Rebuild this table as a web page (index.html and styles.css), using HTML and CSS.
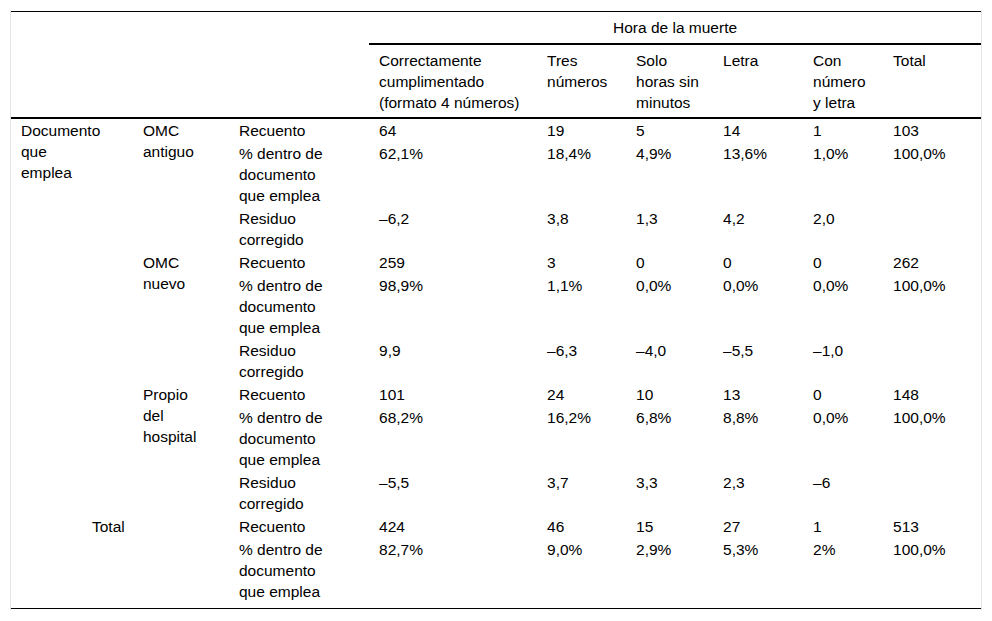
FILE: index.html
```html
<!DOCTYPE html>
<html lang="es">
<head>
<meta charset="utf-8">
<title>Hora de la muerte</title>
<link rel="stylesheet" href="styles.css">
</head>
<body>
<div class="table-wrap">
<table class="data">
<colgroup>
<col class="c1"><col class="c2"><col class="c3"><col class="c4"><col class="c5"><col class="c6"><col class="c7"><col class="c8"><col class="c9">
</colgroup>
<thead>
<tr class="h1">
<th colspan="3" rowspan="2" class="blank"></th>
<th colspan="6" class="group">Hora de la muerte</th>
</tr>
<tr class="h2">
<th>Correctamente<br>cumplimentado<br>(formato 4 números)</th>
<th>Tres<br>números</th>
<th>Solo<br>horas sin<br>minutos</th>
<th>Letra</th>
<th>Con<br>número<br>y letra</th>
<th>Total</th>
</tr>
</thead>
<tbody>
<tr>
<td rowspan="9">Documento<br>que<br>emplea</td>
<td rowspan="3">OMC<br>antiguo</td>
<td>Recuento</td><td>64</td><td>19</td><td>5</td><td>14</td><td>1</td><td>103</td>
</tr>
<tr>
<td>% dentro de<br>documento<br>que emplea</td><td>62,1%</td><td>18,4%</td><td>4,9%</td><td>13,6%</td><td>1,0%</td><td>100,0%</td>
</tr>
<tr>
<td>Residuo<br>corregido</td><td>–6,2</td><td>3,8</td><td>1,3</td><td>4,2</td><td>2,0</td><td></td>
</tr>
<tr>
<td rowspan="3">OMC<br>nuevo</td>
<td>Recuento</td><td>259</td><td>3</td><td>0</td><td>0</td><td>0</td><td>262</td>
</tr>
<tr>
<td>% dentro de<br>documento<br>que emplea</td><td>98,9%</td><td>1,1%</td><td>0,0%</td><td>0,0%</td><td>0,0%</td><td>100,0%</td>
</tr>
<tr>
<td>Residuo<br>corregido</td><td>9,9</td><td>–6,3</td><td>–4,0</td><td>–5,5</td><td>–1,0</td><td></td>
</tr>
<tr>
<td rowspan="3">Propio<br>del<br>hospital</td>
<td>Recuento</td><td>101</td><td>24</td><td>10</td><td>13</td><td>0</td><td>148</td>
</tr>
<tr>
<td>% dentro de<br>documento<br>que emplea</td><td>68,2%</td><td>16,2%</td><td>6,8%</td><td>8,8%</td><td>0,0%</td><td>100,0%</td>
</tr>
<tr>
<td>Residuo<br>corregido</td><td>–5,5</td><td>3,7</td><td>3,3</td><td>2,3</td><td>–6</td><td></td>
</tr>
<tr>
<td colspan="2" rowspan="2" class="total-label">Total</td>
<td>Recuento</td><td>424</td><td>46</td><td>15</td><td>27</td><td>1</td><td>513</td>
</tr>
<tr class="last">
<td>% dentro de<br>documento<br>que emplea</td><td>82,7%</td><td>9,0%</td><td>2,9%</td><td>5,3%</td><td>2%</td><td>100,0%</td>
</tr>
</tbody>
</table>
</div>
</body>
</html>
```

FILE: styles.css
```css
html, body {
  margin: 0;
  padding: 0;
  background: #fff;
}

.table-wrap {
  margin: 10px 0 0 10px;
  width: 970px;
  padding: 1px 0 1px;
  border-left: 1px solid #e4e4e4;
  border-right: 1px solid #e4e4e4;
}

.data {
  width: 970px;
  table-layout: fixed;
  border-collapse: collapse;
  font-family: "Liberation Sans", Arial, sans-serif;
  font-size: 15.5px;
  line-height: 21px;
  color: #000;
  border-top: 1px solid #000;
  border-bottom: 1px solid #000;
}

.c1 { width: 122px; }
.c2 { width: 96px; }
.c3 { width: 140px; }
.c4 { width: 168px; }
.c5 { width: 89px; }
.c6 { width: 87px; }
.c7 { width: 90px; }
.c8 { width: 80px; }
.c9 { width: 98px; }

.data th,
.data td {
  text-align: left;
  vertical-align: top;
  font-weight: normal;
  white-space: nowrap;
  padding: 1px 4px 1px 10px;
}

.data thead th {
  padding-top: 5px;
  padding-bottom: 5px;
}

.data thead .h2 th {
  padding-top: 5px;
  padding-bottom: 4px;
  border-bottom: 2px solid #000;
}

.data thead th.blank {
  border-bottom: 2px solid #000;
}

.data thead th.group {
  text-align: center;
  border-bottom: 2px solid #000;
  padding-left: 0;
  padding-right: 0;
}

.data td.total-label {
  padding-left: 81px;
}

.data tr.last td {
  padding-bottom: 6px;
}
```
